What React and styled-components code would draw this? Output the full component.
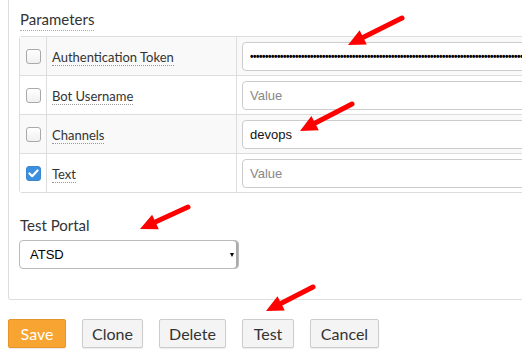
import React from 'react';
import styled, { createGlobalStyle } from 'styled-components';

const Global = createGlobalStyle`
  html, body {
    margin: 0;
    padding: 0;
    background: #fff;
    overflow: hidden;
  }
  body {
    font-family: Lato, "Open Sans", sans-serif;
    color: #333;
  }
`;

const Page = styled.div`
  position: relative;
  width: 522px;
  height: 357px;
  overflow: hidden;
`;

const Panel = styled.div`
  margin-left: 8px;
  width: 700px;
  border: 1px solid #ddd;
  border-top: none;
  border-radius: 0 0 0 3px;
  padding: 9px 0 30px 10px;
`;

const Heading = styled.div`
  display: inline-block;
  font-size: 15px;
  line-height: 20px;
  color: #333;
  margin-left: 1px;
  padding-bottom: 1px;
  border-bottom: 1px dotted #aaa;
`;

const Table = styled.div`
  margin-top: 5px;
  width: 640px;
  border: 1px solid #ddd;
  border-radius: 3px 0 0 3px;
`;

const Row = styled.div`
  display: grid;
  grid-template-columns: 26px 190px 1fr;
  height: 38px;
  background: ${p => (p.$striped ? '#f9f9f9' : '#fff')};
  & + & {
    border-top: 1px solid #ddd;
  }
`;

const Cell = styled.div`
  display: flex;
  align-items: center;
  & + & {
    border-left: 1px solid #ddd;
  }
`;

const CheckCell = styled(Cell)`
  justify-content: center;
  padding-left: 1px;
`;

const Box = styled.span`
  width: 13px;
  height: 13px;
  border-radius: 3px;
  border: 1px solid ${p => (p.$checked ? '#3a86d0' : '#a9a9a9')};
  background: ${p => (p.$checked ? '#3b8fde' : 'linear-gradient(#fff, #f0f0f0)')};
  display: flex;
  align-items: center;
  justify-content: center;
`;

const Label = styled.span`
  margin: 3px 0 0 5px;
  font-size: 13px;
  line-height: 15px;
  color: #333;
  border-bottom: 1px dotted #999;
`;

const ValueCell = styled(Cell)`
  padding-left: 5px;
`;

const Input = styled.div`
  box-sizing: border-box;
  width: 100%;
  height: 29px;
  border: 1px solid #ccc;
  border-radius: 4px;
  background: #fff;
  display: flex;
  align-items: center;
  padding-left: 7px;
  font-family: "Liberation Sans", Arial, sans-serif;
  font-size: 13px;
  color: ${p => (p.$placeholder ? '#888' : '#111')};
  overflow: hidden;
  white-space: nowrap;
`;

const Dots = styled.span`
  font-size: 10px;
  letter-spacing: -0.5px;
  font-weight: bold;
  color: #000;
`;

const PortalLabel = styled.div`
  margin-top: 22px;
  font-size: 15px;
  line-height: 20px;
  margin-left: 1px;
  color: #333;
`;

const Select = styled.div`
  box-sizing: border-box;
  margin-top: 5px;
  width: 220px;
  height: 29px;
  border: 1px solid #bbb;
  border-radius: 4px;
  box-shadow: inset -2px 0 0 #aaa;
  display: flex;
  align-items: center;
  justify-content: space-between;
  padding: 0 4px 0 10px;
  font-family: "Liberation Sans", Arial, sans-serif;
  font-size: 13px;
  color: #000;
`;

const Caret = styled.span`
  width: 0;
  height: 0;
  border-left: 2px solid transparent;
  border-right: 2px solid transparent;
  border-top: 4px solid #000;
`;

const Actions = styled.div`
  display: flex;
  gap: 16px;
  margin: 19px 0 0 8px;
`;

const Button = styled.button`
  box-sizing: border-box;
  width: ${p => p.$w}px;
  height: 29px;
  padding: 0;
  font-family: Lato, "Open Sans", sans-serif;
  font-size: 16px;
  border-radius: 2px;
  border: 1px solid ${p => (p.$primary ? '#e5952a' : '#ccc')};
  background: ${p => (p.$primary ? '#f7a432' : '#f4f4f4')};
  color: ${p => (p.$primary ? '#fff' : '#333')};
  box-shadow: 0 1px 1px rgba(0, 0, 0, 0.08);
`;

const Overlay = styled.svg`
  position: absolute;
  left: 0;
  top: 0;
  pointer-events: none;
`;

const Check = () => (
  <svg width="11" height="9" viewBox="0 0 11 9">
    <path d="M1.5 4.5 L4.2 7.2 L9.5 1.5" fill="none" stroke="#fff" strokeWidth="2.2" strokeLinecap="round" strokeLinejoin="round" />
  </svg>
);

// red callout arrow: tail (x1,y1) -> tip (x2,y2)
const Arrow = ({ x1, y1, x2, y2 }) => {
  const dx = x2 - x1;
  const dy = y2 - y1;
  const len = Math.hypot(dx, dy);
  const ux = dx / len;
  const uy = dy / len;
  const head = 17;
  const half = 8;
  const bx = x2 - ux * head;
  const by = y2 - uy * head;
  const px = -uy;
  const py = ux;
  return (
    <g>
      <line x1={x1} y1={y1} x2={bx + ux * 2} y2={by + uy * 2} stroke="#f00" strokeWidth="5" strokeLinecap="round" />
      <polygon
        points={`${x2},${y2} ${bx + px * half},${by + py * half} ${bx - px * half},${by - py * half}`}
        fill="#f00"
      />
    </g>
  );
};

const params = [
  { label: 'Authentication Token', kind: 'password' },
  { label: 'Bot Username', kind: 'empty' },
  { label: 'Channels', kind: 'text', value: 'devops' },
  { label: 'Text', kind: 'empty', checked: true },
];

const buttons = [
  { text: 'Save', w: 58, primary: true },
  { text: 'Clone', w: 61 },
  { text: 'Delete', w: 67 },
  { text: 'Test', w: 52 },
  { text: 'Cancel', w: 69 },
];

export default function App() {
  return (
    <Page>
      <Global />
      <Panel>
        <Heading>Parameters</Heading>
        <Table>
          {params.map((p, i) => (
            <Row key={p.label} $striped={i % 2 === 0}>
              <CheckCell>
                <Box $checked={p.checked}>{p.checked && <Check />}</Box>
              </CheckCell>
              <Cell>
                <Label>{p.label}</Label>
              </Cell>
              <ValueCell>
                {p.kind === 'password' && (
                  <Input>
                    <Dots>{'•'.repeat(120)}</Dots>
                  </Input>
                )}
                {p.kind === 'text' && <Input>{p.value}</Input>}
                {p.kind === 'empty' && <Input $placeholder>Value</Input>}
              </ValueCell>
            </Row>
          ))}
        </Table>
        <PortalLabel>Test Portal</PortalLabel>
        <Select>
          <span>ATSD</span>
          <Caret />
        </Select>
      </Panel>
      <Actions>
        {buttons.map(b => (
          <Button key={b.text} $w={b.w} $primary={b.primary}>{b.text}</Button>
        ))}
      </Actions>
      <Overlay width="522" height="357">
        <Arrow x1={402} y1={18} x2={348} y2={45} />
        <Arrow x1={352} y1={104} x2={300} y2={131} />
        <Arrow x1={188} y1={207} x2={140} y2={229} />
        <Arrow x1={313} y1={287} x2={266} y2={311} />
      </Overlay>
    </Page>
  );
}
